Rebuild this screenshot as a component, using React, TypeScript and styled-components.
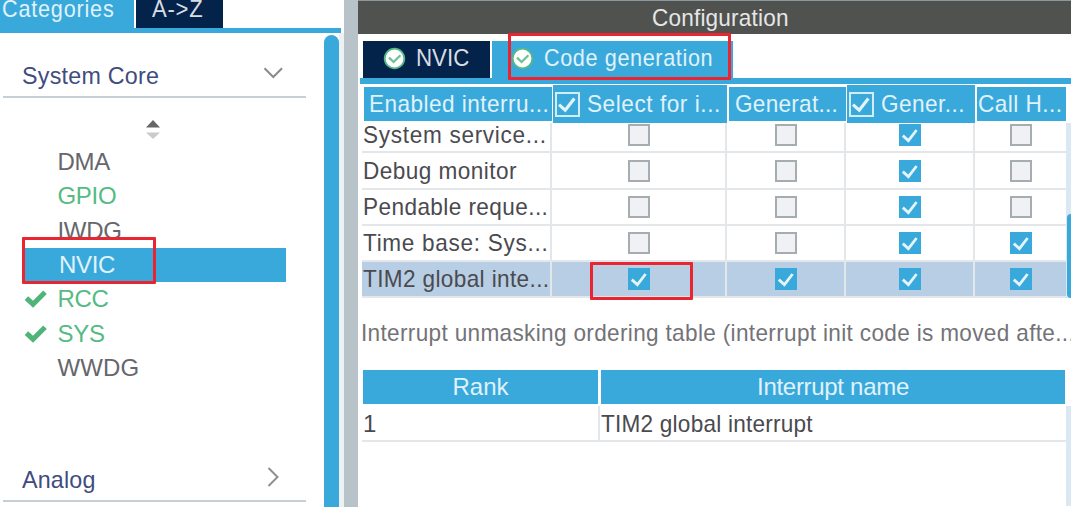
import * as React from "react";
import styled, { createGlobalStyle } from "styled-components";

const BLUE = "#39a9dc";
const NAVY = "#03234b";
const GREEN = "#55bb83";

const GlobalStyle = createGlobalStyle`
  body {
    margin: 0;
    background: #fff;
    overflow: hidden;
    font-family: "Liberation Sans", Arial, sans-serif;
    font-size: 24px;
    line-height: 28px;
  }

  svg {
    display: block;
    flex: none;
  }
`;

const Page = styled("div")`
  position: relative;
  display: flex;
  width: 1071px;
  height: 507px;
  overflow: hidden;
`;

// text is squeezed a little in places, like the bitmap font of the tool
const Label = styled("span")<{
  $color?: string;
  $spacing?: number;
  $stretch?: number;
}>`
  display: inline-block;
  white-space: pre;
  color: ${(p) => p.$color ?? "#4a4a4f"};
  letter-spacing: ${(p) => p.$spacing ?? 0}px;
  transform: ${(p) => (p.$stretch ? `scaleX(${p.$stretch})` : "none")};
  transform-origin: left center;
`;

const Sidebar = styled("aside")`
  display: flex;
  flex-direction: column;
  flex: none;
  width: 344px;
`;

const SideTabs = styled("div")`
  display: flex;
  gap: 2px;
  height: 28px;
  width: 341px;
  box-sizing: content-box;
  border-bottom: 5px solid ${BLUE};
`;

const SideTab = styled("div")<{ $active?: boolean; $width: number }>`
  box-sizing: border-box;
  width: ${(p) => p.$width}px;
  height: 28px;
  padding-left: ${(p) => (p.$active ? 2 : 16)}px;
  background: ${(p) => (p.$active ? BLUE : NAVY)};
  line-height: 17px;
`;

const SideBody = styled("div")`
  display: flex;
  flex: 1;
`;

const Tree = styled("div")`
  flex: none;
  width: 323.5px;
`;

const SectionTitle = styled("div")<{ $top: number }>`
  display: flex;
  align-items: center;
  justify-content: space-between;
  box-sizing: border-box;
  width: 303px;
  height: 44px;
  margin: ${(p) => p.$top}px 0 0 3px;
  padding: 1px 23px 0 19px;
  border-bottom: 2px solid #c6cfd3;

  & > svg {
    margin-top: -5px;
  }
`;

const SortRow = styled("div")`
  display: flex;
  justify-content: center;
  padding: 22px 18px 5.7px 0;
`;

const Items = styled("div")`
  width: 263px;
  margin-left: 23px;
`;

const Item = styled("div")<{ $selected?: boolean }>`
  display: flex;
  align-items: center;
  height: 34.4px;
  background: ${(p) => (p.$selected ? BLUE : "transparent")};
`;

const Mark = styled("div")<{ $width: number }>`
  flex: none;
  width: ${(p) => p.$width}px;
`;

const SideThumb = styled("div")`
  width: 15px;
  margin-top: 2px;
  background: ${BLUE};
  border-radius: 7.5px 7.5px 0 0;
`;

const SideTrack = styled("div")`
  flex: 1;
  background: #edf1f4;
`;

const Splitter = styled("div")`
  flex: none;
  width: 14px;
  background: #b8c3c9;
`;

const Main = styled("main")`
  flex: none;
  width: 713px;
`;

const TitleBar = styled("div")`
  box-sizing: border-box;
  height: 34px;
  padding: 3px 0 0 294px;
  border-top: 1px solid #8a979d;
  background: #505250;
`;

const Tabs = styled("div")`
  display: flex;
  gap: 2px;
  height: 37.5px;
  margin: 6.5px 0 0 2px;
  padding-left: 3px;
  border-bottom: 6px solid ${BLUE};
`;

const Tab = styled("div")<{ $active?: boolean }>`
  display: flex;
  align-items: center;
  box-sizing: border-box;
  width: ${(p) => (p.$active ? 241 : 127)}px;
  padding: 0 0 2px ${(p) => (p.$active ? 19 : 20)}px;
  gap: 10px;
  background: ${(p) => (p.$active ? BLUE : NAVY)};
`;

const Columns = styled("div")`
  display: grid;
  grid-template-columns: 190px 175px 119px 129px 91px;
`;

const TableArea = styled("div")`
  display: flex;
  justify-content: space-between;
  padding-left: 4px;
`;

const HeadRow = styled(Columns)`
  height: 38.5px;
  padding: 1px 0 0 4px;
  box-sizing: border-box;
`;

const HeadCell = styled("div")<{ $checkable?: boolean; $pad?: number }>`
  display: flex;
  align-items: center;
  box-sizing: border-box;
  height: ${(p) => (p.$checkable ? 38.5 : 34)}px;
  margin: ${(p) => (p.$checkable ? "0 0 0 1px" : "2px 0 0 2px")};
  padding-left: ${(p) => p.$pad ?? 2}px;
  gap: 7px;
  background: ${BLUE};
  overflow: hidden;
`;

const Viewport = styled("div")`
  display: flex;
  flex-direction: column;
  justify-content: flex-end;
  width: 704px;
  height: 175.5px;
  overflow: hidden;
`;

const Row = styled(Columns)<{ $selected?: boolean }>`
  flex: none;
  height: 36.15px;
  background: ${(p) => (p.$selected ? "#b8cee4" : "#fff")};
`;

const Cell = styled("div")<{ $name?: boolean }>`
  display: flex;
  align-items: center;
  justify-content: ${(p) => (p.$name ? "flex-start" : "center")};
  box-sizing: border-box;
  padding: 1px 0 0 ${(p) => (p.$name ? 1 : 0)}px;
  border-right: 2px solid #e3e7ea;
  border-bottom: 2px solid #e3e7ea;

  &:last-child {
    border-right: none;
  }
`;

const Box = styled("div")<{ $checked?: boolean }>`
  box-sizing: border-box;
  width: 22px;
  height: 22px;
  border: 2px solid ${(p) => (p.$checked ? BLUE : "#a6adb1")};
  background: ${(p) => (p.$checked ? BLUE : "#f0f1f4")};
`;

const HeadBox = styled("div")`
  flex: none;
  box-sizing: border-box;
  width: 25px;
  height: 25px;
  border: 2px solid #d3edf8;
`;

const Track = styled("div")<{ $pad: number }>`
  box-sizing: border-box;
  width: 5px;
  padding: ${(p) => p.$pad}px 0 0 1px;
  background: #dae8f4;
`;

const Thumb = styled("div")`
  height: 84px;
  background: ${BLUE};
  border-radius: 6px 0 0 6px;
`;

const Hint = styled("div")`
  height: 28px;
  margin: 21px 0 23px 3px;
  overflow: hidden;
`;

const RankHead = styled("div")`
  display: grid;
  grid-template-columns: 235px 464px;
  gap: 3px;
  height: 34px;
  margin-left: 5px;
`;

const RankHeadCell = styled("div")`
  display: flex;
  align-items: center;
  justify-content: center;
  background: ${BLUE};
`;

const RankBody = styled("div")`
  display: flex;
  justify-content: space-between;
  height: 100px;
  margin-top: 2px;
  padding-left: 4px;
`;

const RankRow = styled("div")`
  display: grid;
  grid-template-columns: 238px 466px;
  height: 36px;
`;

const Frame = styled("div")<{ $x: number; $y: number; $w: number; $h: number }>`
  position: absolute;
  box-sizing: border-box;
  left: ${(p) => p.$x}px;
  top: ${(p) => p.$y}px;
  width: ${(p) => p.$w}px;
  height: ${(p) => p.$h}px;
  border: 3px solid #ea2430;
  border-radius: 1px;
`;

const Tick = ({ size }: { size: number }) => (
  <svg width={size} height={size} viewBox="0 0 18 18">
    <path
      d="M1.8 9.6 L7.4 14.6 L15.6 4"
      fill="none"
      stroke="#e4f4fb"
      strokeWidth="2.8"
    />
  </svg>
);

const GreenCheck = () => (
  <svg width="24" height="20" viewBox="0 0 24 20">
    <path d="M3.4 9.2 L10 15.2 L22 3.2" fill="none" stroke="#4fb477" strokeWidth="5" />
  </svg>
);

const StatusIcon = () => (
  <svg width="23" height="23" viewBox="0 0 23 23">
    <circle cx="11.5" cy="11.5" r="9.8" fill="#fff" stroke="#58b884" strokeWidth="1.8" />
    <path d="M6 10.6 L10.6 15 L17.4 8.2" fill="none" stroke="#6cc092" strokeWidth="2.2" />
  </svg>
);

const peripherals = [
  { name: "DMA" },
  { name: "GPIO", used: true },
  { name: "IWDG" },
  { name: "NVIC", selected: true },
  { name: "RCC", used: true, checked: true },
  { name: "SYS", used: true, checked: true },
  { name: "WWDG", spacing: 0.1 },
];

const interrupts = [
  { name: "System service...", spacing: 0.75, flags: [false, false, true, false] },
  { name: "Debug monitor", spacing: 0.5, flags: [false, false, true, false] },
  { name: "Pendable reque...", spacing: 0.45, flags: [false, false, true, false] },
  { name: "Time base: Sys...", spacing: 0.75, flags: [false, false, true, true] },
  {
    name: "TIM2 global inte...",
    spacing: 0.4,
    flags: [true, true, true, true],
    selected: true,
  },
];

const headers = [
  { name: "Enabled interru...", pad: 5, spacing: 0.5 },
  { name: "Select for i...", checkable: true, spacing: 0.6 },
  { name: "Generat...", pad: 6, spacing: 0.3 },
  { name: "Gener...", checkable: true, spacing: 0.5 },
  { name: "Call H...", pad: 1, spacing: 0.5 },
];

const LIGHT = "#e0f2fa";

function Categories(): JSX.Element {
  return (
    <Sidebar>
      <SideTabs>
        <SideTab $active $width={134}>
          <Label $color={LIGHT} $spacing={0.9} $stretch={0.9}>
            Categories
          </Label>
        </SideTab>
        <SideTab $width={87}>
          <Label $color="#d9dde3" $spacing={0.8} $stretch={0.92}>
            {"A->Z"}
          </Label>
        </SideTab>
      </SideTabs>
      <SideBody>
        <Tree>
          <SectionTitle $top={21}>
            <Label $color="#404c80" $spacing={0.25} $stretch={0.97}>
              System Core
            </Label>
            <svg width="20" height="12" viewBox="0 0 20 12">
              <path d="M1.5 1.2 L10.3 10 L19 1.2" fill="none" stroke="#8a8a8a" strokeWidth="2" />
            </svg>
          </SectionTitle>
          <SortRow>
            <svg width="14" height="19" viewBox="0 0 14 19">
              <path d="M0 7.5 L7 0 L14 7.5 Z" fill="#666" />
              <path d="M0 12.5 L7 19 L14 12.5 Z" fill="#cbcbcb" />
            </svg>
          </SortRow>
          <Items>
            {peripherals.map((p) => (
              <Item key={p.name} $selected={p.selected}>
                <Mark $width={p.selected ? 36 : 34.5}>{p.checked && <GreenCheck />}</Mark>
                <Label
                  $color={p.selected ? LIGHT : p.used ? GREEN : "#66676c"}
                  $spacing={p.spacing ?? -0.3}
                >
                  {p.name}
                </Label>
              </Item>
            ))}
          </Items>
          <SectionTitle $top={73}>
            <Label $color="#404c80" $spacing={0.2} $stretch={0.97}>
              Analog
            </Label>
            <svg width="16" height="20" viewBox="0 0 16 20">
              <path d="M1.5 1 L10.5 10 L1.5 19" fill="none" stroke="#8f8f8f" strokeWidth="2" />
            </svg>
          </SectionTitle>
        </Tree>
        <SideThumb />
        <SideTrack />
      </SideBody>
    </Sidebar>
  );
}

function InterruptTable(): JSX.Element {
  return (
    <>
      <HeadRow>
        {headers.map((h) => (
          <HeadCell key={h.name} $checkable={h.checkable} $pad={h.pad}>
            {h.checkable && (
              <HeadBox>
                <Tick size={20} />
              </HeadBox>
            )}
            <Label $color={LIGHT} $spacing={h.spacing} $stretch={0.94}>
              {h.name}
            </Label>
          </HeadCell>
        ))}
      </HeadRow>
      <TableArea>
        <Viewport>
          {interrupts.map((row) => (
            <Row key={row.name} $selected={row.selected}>
              <Cell $name>
                <Label $spacing={row.spacing} $stretch={0.94}>
                  {row.name}
                </Label>
              </Cell>
              {row.flags.map((checked, i) => (
                <Cell key={i}>
                  <Box $checked={checked}>{checked && <Tick size={18} />}</Box>
                </Cell>
              ))}
            </Row>
          ))}
        </Viewport>
        <Track $pad={91}>
          <Thumb />
        </Track>
      </TableArea>
    </>
  );
}

function App(): JSX.Element {
  return (
    <Page>
      <GlobalStyle />
      <Categories />
      <Splitter />
      <Main>
        <TitleBar>
          <Label $color="#e6e6e6" $spacing={0.2} $stretch={0.94}>
            Configuration
          </Label>
        </TitleBar>
        <Tabs>
          <Tab>
            <StatusIcon />
            <Label $color="#d9dde3" $stretch={0.93}>
              NVIC
            </Label>
          </Tab>
          <Tab $active>
            <StatusIcon />
            <Label $color={LIGHT} $spacing={0.7} $stretch={0.9}>
              Code generation
            </Label>
          </Tab>
        </Tabs>
        <InterruptTable />
        <Hint>
          <Label $color="#737378" $spacing={0.36} $stretch={0.94}>
            Interrupt unmasking ordering table (interrupt init code is moved afte...
          </Label>
        </Hint>
        <RankHead>
          <RankHeadCell>
            <Label $color={LIGHT}>Rank</Label>
          </RankHeadCell>
          <RankHeadCell>
            <Label $color={LIGHT} $spacing={-0.3}>
              Interrupt name
            </Label>
          </RankHeadCell>
        </RankHead>
        <RankBody>
          <RankRow>
            <Cell $name>
              <Label>1</Label>
            </Cell>
            <Cell $name>
              <Label $spacing={0.25} $stretch={0.94}>
                TIM2 global interrupt
              </Label>
            </Cell>
          </RankRow>
          <Track $pad={0} />
        </RankBody>
      </Main>
      <Frame $x={22} $y={237} $w={134} $h={47} />
      <Frame $x={508} $y={33} $w={223} $h={47} />
      <Frame $x={590} $y={262} $w={103} $h={38} />
    </Page>
  );
}

export default App;
